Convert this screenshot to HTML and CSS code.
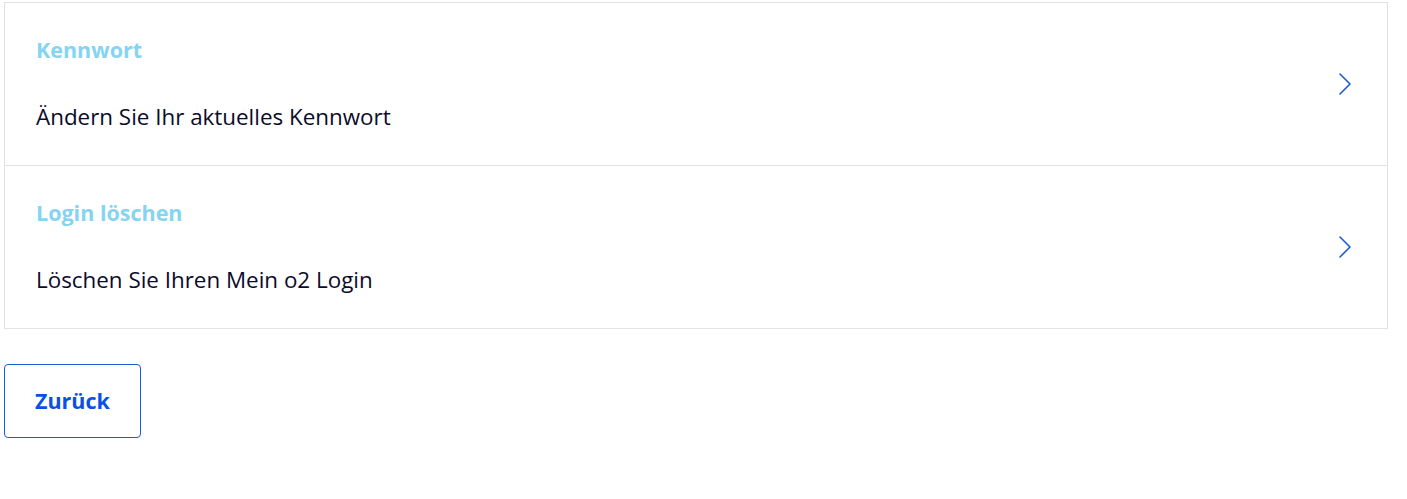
FILE: index.html
```html
<!DOCTYPE html>
<html lang="de">
<head>
    <meta charset="UTF-8">
    <meta name="viewport" content="width=device-width, initial-scale=1.0">
    <title>Login-Einstellungen</title>
    <link rel="stylesheet" href="styles.css">
</head>
<body>

    <div class="page">
        <div class="settings-list">
            <a class="settings-item" href="#">
                <div class="settings-text">
                    <div class="settings-title">Kennwort</div>
                    <div class="settings-desc">Ändern Sie Ihr aktuelles Kennwort</div>
                </div>
                <svg class="chevron" width="14" height="22" viewBox="0 0 14 22" aria-hidden="true">
                    <path d="M2 1 L12 11 L2 21" fill="none" stroke="#1d5bd6" stroke-width="1.6" stroke-linecap="round" stroke-linejoin="round"/>
                </svg>
            </a>
            <a class="settings-item" href="#">
                <div class="settings-text">
                    <div class="settings-title">Login löschen</div>
                    <div class="settings-desc">Löschen Sie Ihren Mein o2 Login</div>
                </div>
                <svg class="chevron" width="14" height="22" viewBox="0 0 14 22" aria-hidden="true">
                    <path d="M2 1 L12 11 L2 21" fill="none" stroke="#1d5bd6" stroke-width="1.6" stroke-linecap="round" stroke-linejoin="round"/>
                </svg>
            </a>
        </div>

        <div class="actions">
            <a href="#" class="button-outline">Zurück</a>
        </div>
    </div>

</body>
</html>
```

FILE: styles.css
```css
body {
    font-family: "Open Sans", Arial, sans-serif;
    margin: 0;
    padding: 0;
    background-color: #fff;
    color: #0b0b2b;
}
.page {
    padding: 2px 19px 0 4px;
}
.settings-list {
    border: 1px solid #e2e2e2;
}
.settings-item {
    display: flex;
    align-items: center;
    justify-content: space-between;
    padding: 32px 35px 33px 31px;
    text-decoration: none;
    color: inherit;
}
.settings-item + .settings-item {
    border-top: 1px solid #e2e2e2;
}
.settings-title {
    font-size: 21.5px;
    line-height: 30px;
    font-weight: 700;
    color: #84d4f2;
    margin-bottom: 37px;
}
.settings-desc {
    font-size: 22.4px;
    line-height: 30px;
    color: #0b0b2b;
}
.chevron {
    display: block;
}
.actions {
    margin-top: 35px;
}
.button-outline {
    display: inline-block;
    padding: 21px 30px;
    border: 1px solid #1d5bd6;
    border-radius: 4px;
    font-size: 21.5px;
    line-height: 30px;
    font-weight: 700;
    color: #0a4fe6;
    text-decoration: none;
}
```
